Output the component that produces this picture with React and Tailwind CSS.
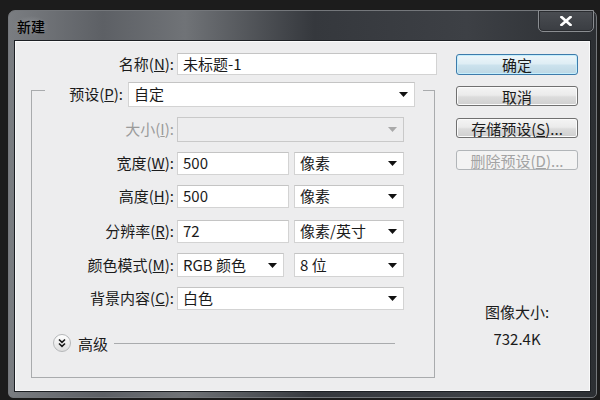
import React from 'react';

const Arrow = ({ disabled }) => (
  <svg width="9" height="5" viewBox="0 0 9 5" className="shrink-0">
    <path d="M0 0h9L4.5 5z" fill={disabled ? '#a9a9a9' : '#111'} />
  </svg>
);

const Input = ({ className, children }) => (
  <div className={`h-full shrink-0 bg-white border border-[#d3d3d3] border-t-[#c4c4c4] flex items-center pl-[5px] ${className}`}>
    {children}
  </div>
);

const Select = ({ className, children, disabled }) => (
  <div
    className={`h-full shrink-0 border flex items-center justify-between pl-[5px] pr-[6px] ${
      disabled ? 'bg-[#ededee] border-[#c9c9c9]' : 'bg-white border-[#d3d3d3] border-t-[#c4c4c4]'
    } ${className}`}
  >
    <span>{children}</span>
    <Arrow disabled={disabled} />
  </div>
);

const Label = ({ children, disabled }) => (
  <span className={`w-[145px] shrink-0 text-right pr-[3px] ${disabled ? 'text-[#9b9b9b]' : ''}`}>{children}</span>
);

const Button = ({ children, primary, disabled, className }) => {
  let look = 'border-[#707070] bg-[linear-gradient(#f4f4f4,#ebebeb_45%,#dcdcdc_55%,#cfcfcf)] shadow-[inset_0_0_0_1px_#fbfbfb]';
  if (primary) look = 'border-[#3d7bab] bg-[linear-gradient(#edf6fa,#dfeef5_45%,#cbe2ed_55%,#bdd7e4)] shadow-[inset_0_0_0_1px_#c5eefc]';
  if (disabled) look = 'border-[#b1b5b8] bg-[#f3f3f3] text-[#a3a3a3]';
  return (
    <div className={`h-[20px] rounded-[3px] border flex items-center justify-center leading-none ${look} ${className}`}>
      {children}
    </div>
  );
};

export default function App() {
  return (
    <div className="w-[600px] h-[400px] overflow-hidden bg-[#1c1c1c] pt-[10px] pl-[8px] pr-[3px] pb-[2px] flex font-['Noto_Sans_CJK_SC',sans-serif] text-[15px] text-[#1b1b1b]">
      <div className="flex-1 flex flex-col rounded-t-[7px] rounded-b-[5px] border border-[#74777b] bg-[linear-gradient(90deg,#7a7d81_0%,#5d6065_16%,#707377_30%,#35383d_52%,#3d4045_78%,#2c2f33_100%)]">
        {/* title bar */}
        <div className="h-[30px] flex items-start justify-between shrink-0">
          <span className="ml-[4px] px-[4px] mt-[5px] leading-[20px] text-[14px] font-medium text-black bg-[radial-gradient(closest-side,#8d9094,transparent)]">新建</span>
          <div className="-mt-[1px] mr-[2px] w-[56px] h-[22px] rounded-b-[5px] border border-[#8a8d91] bg-[linear-gradient(#4a4d52,#3a3d42)] shadow-[inset_0_0_0_1px_#2a2c30] flex items-center justify-center">
            <svg width="12" height="10" viewBox="0 0 12 10">
              <path d="M1.5 1l9 8M10.5 1l-9 8" stroke="#fff" strokeWidth="2.6" strokeLinecap="square" />
            </svg>
          </div>
        </div>

        {/* client */}
        <div className="flex-1 mx-[6px] mb-[6px] bg-[#ededee] border border-[#fafafa] shadow-[0_0_0_1px_#1d2024] flex">
          {/* left */}
          <div className="w-[440px] shrink-0 flex flex-col">
            <div className="mt-[11px] h-[22px] flex items-center">
              <span className="w-[161px] shrink-0 text-right pr-[3px]">名称(<u>N</u>):</span>
              <Input className="w-[260px]">未标题-1</Input>
            </div>

            <div className="mt-[15px] ml-[15px] w-[404px] h-[288px] border border-[#a9abad] flex flex-col">
              <div className="-mt-[9px] ml-[13px] w-[378px] h-[25px] shrink-0 bg-[#ededee] flex items-center">
                <span className="w-[78px] shrink-0 text-right">预设(<u>P</u>):</span>
                <Select className="ml-[5px] w-[287px]">自定</Select>
              </div>

              <div className="mt-[10px] h-[25px] flex items-center">
                <Label disabled>大小(<u>I</u>):</Label>
                <Select disabled className="w-[227px]"></Select>
              </div>

              <div className="mt-[10px] h-[23px] flex items-center">
                <Label>宽度(<u>W</u>):</Label>
                <Input className="w-[112px]">500</Input>
                <Select className="ml-[5px] w-[110px]">像素</Select>
              </div>

              <div className="mt-[10px] h-[23px] flex items-center">
                <Label>高度(<u>H</u>):</Label>
                <Input className="w-[112px]">500</Input>
                <Select className="ml-[5px] w-[110px]">像素</Select>
              </div>

              <div className="mt-[12px] h-[23px] flex items-center">
                <Label>分辨率(<u>R</u>):</Label>
                <Input className="w-[112px]">72</Input>
                <Select className="ml-[5px] w-[110px]">像素/英寸</Select>
              </div>

              <div className="mt-[10px] h-[24px] flex items-center">
                <Label>颜色模式(<u>M</u>):</Label>
                <Select className="w-[107px]">RGB 颜色</Select>
                <Select className="ml-[10px] w-[110px]">8 位</Select>
              </div>

              <div className="mt-[10px] h-[23px] flex items-center">
                <Label>背景内容(<u>C</u>):</Label>
                <Select className="w-[227px]">白色</Select>
              </div>

              <div className="mt-[24px] h-[18px] flex items-center">
                <div className="ml-[21px] w-[18px] h-[18px] shrink-0 rounded-full border border-[#b5b7b9] bg-[linear-gradient(#ffffff,#dedede)] flex items-center justify-center">
                  <svg width="10" height="10" viewBox="0 0 10 10">
                    <path d="M2 1.5l3 2.8 3-2.8M2 5.5l3 2.8 3-2.8" fill="none" stroke="#1a1a1a" strokeWidth="1.6" />
                  </svg>
                </div>
                <span className="ml-[7px] leading-none">高级</span>
                <div className="flex-1 h-px bg-[#a9abad] ml-[6px] mr-[39px]"></div>
              </div>
            </div>
          </div>

          {/* right */}
          <div className="w-[122px] shrink-0 flex flex-col text-center">
            <Button primary className="mt-[12px] h-[21px]">确定</Button>
            <Button className="mt-[11px]">取消</Button>
            <Button className="mt-[12px]">存储预设(<u>S</u>)...</Button>
            <Button disabled className="mt-[12px]">删除预设(<u>D</u>)...</Button>
            <div className="mt-[132px] leading-[20px]">图像大小:</div>
            <div className="mt-[7px] leading-[20px]">732.4K</div>
          </div>
        </div>
      </div>
    </div>
  );
}
